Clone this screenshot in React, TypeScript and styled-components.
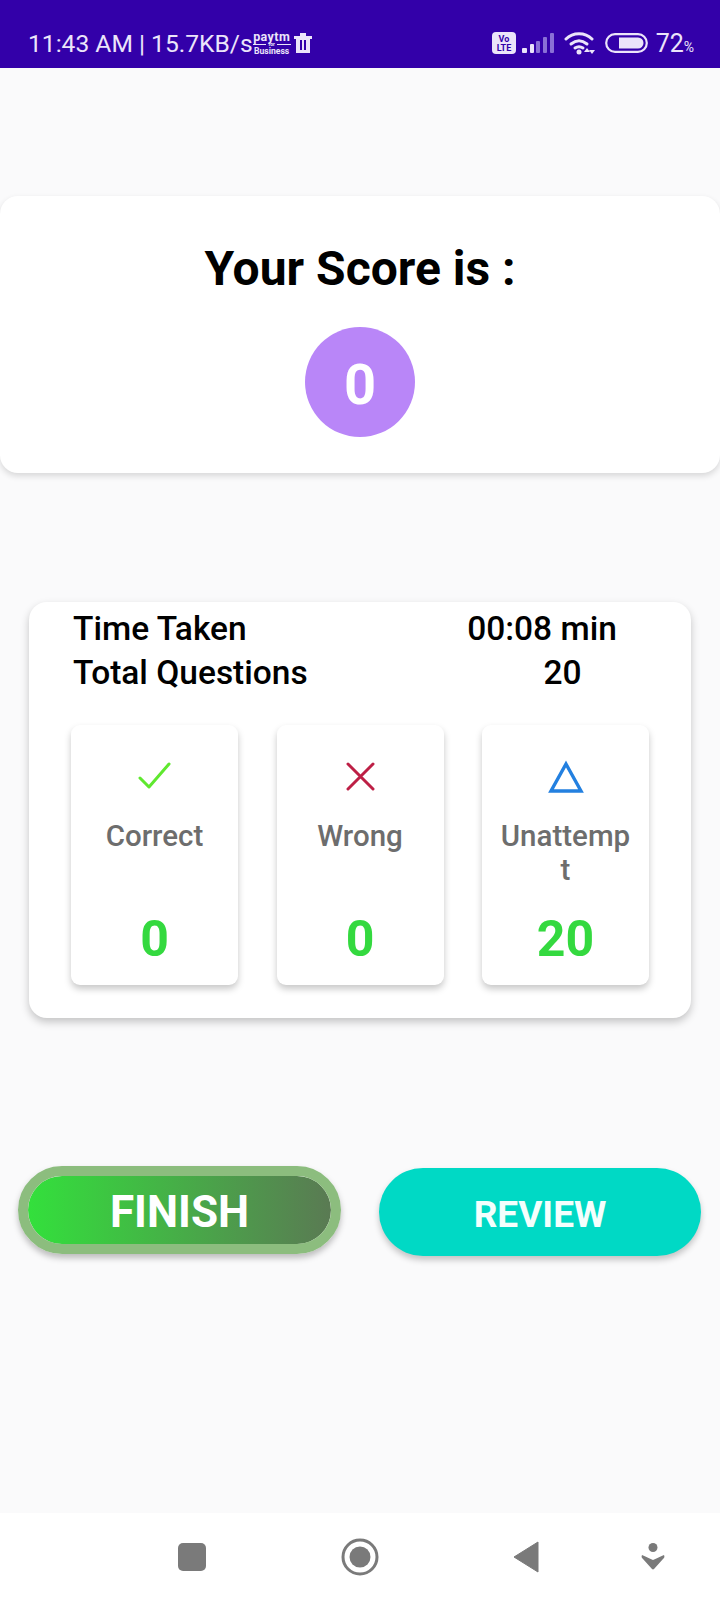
import React from "react";
import styled, { createGlobalStyle } from "styled-components";

const Global = createGlobalStyle`
  html, body { margin: 0; padding: 0; background: #fafafb; }
  * { box-sizing: border-box; }
`;

const Screen = styled.div`
  width: 720px;
  height: 1600px;
  display: flex;
  flex-direction: column;
  background: #fafafb;
  font-family: Roboto, "Liberation Sans", sans-serif;
  overflow: hidden;
`;

const StatusBar = styled.div`
  height: 68px;
  flex: none;
  background: #3300a9;
  color: #ebe4fa;
  display: flex;
  align-items: center;
  justify-content: space-between;
  padding: 18px 26px 0 28px;
  font-size: 25px;
`;

const StatusGroup = styled.div`
  display: flex;
  align-items: center;
`;

const Clock = styled.span`
  font-size: 24.6px;
  white-space: nowrap;
`;

const Paytm = styled.div`
  width: 38px;
  display: flex;
  flex-direction: column;
  align-items: center;
  line-height: 1;
  font-weight: 700;
`;

const PaytmTop = styled.span`
  font-size: 12.5px;
  line-height: 11px;
  letter-spacing: 0.4px;
`;

const PaytmMid = styled.span`
  width: 100%;
  display: flex;
  align-items: center;
  gap: 2px;
  font-size: 5px;
  line-height: 5px;
  &::before,
  &::after {
    content: "";
    flex: 1;
    height: 1px;
    background: #ebe4fa;
  }
`;

const PaytmBottom = styled.span`
  font-size: 8.6px;
  line-height: 9px;
`;

const StatusIcon = styled.svg<{ $gap: number }>`
  display: block;
  flex: none;
  margin-left: ${(p) => p.$gap}px;
`;

const Battery = styled.span`
  font-size: 25px;
  margin-left: 8px;
  white-space: nowrap;
`;

const Percent = styled.span`
  font-size: 14px;
`;

const Main = styled.main`
  flex: 1;
  display: flex;
  flex-direction: column;
`;

const ScoreCard = styled.section`
  margin-top: 128px;
  height: 277px;
  background: #fff;
  border-radius: 18px;
  box-shadow: 0 3px 6px rgba(0, 0, 0, 0.14);
  display: flex;
  flex-direction: column;
  align-items: center;
  padding-top: 46px;
`;

const ScoreTitle = styled.h1`
  margin: 0;
  font-size: 48px;
  line-height: 54px;
  font-weight: 700;
  color: #000;
`;

const ScoreCircle = styled.div`
  margin-top: 31px;
  width: 110px;
  height: 110px;
  border-radius: 50%;
  background: #b986f8;
  color: #fff;
  display: flex;
  align-items: center;
  justify-content: center;
  padding-top: 5px;
  font-size: 56px;
  font-weight: 700;
`;

const StatsCard = styled.section`
  margin: 129px 29px 0;
  height: 416px;
  background: #fff;
  border-radius: 18px;
  box-shadow: 0 4px 8px rgba(0, 0, 0, 0.22);
  padding: 4px 41px 0;
`;

const StatRow = styled.div`
  display: grid;
  grid-template-columns: 1fr 200px;
  height: 44.5px;
  align-items: center;
  padding-left: 3px;
  font-size: 33.5px;
  font-weight: 500;
  color: #000;
`;

const StatValue = styled.span<{ $left: number; $right: number }>`
  text-align: center;
  padding: 0 ${(p) => p.$right}px 0 ${(p) => p.$left}px;
  white-space: nowrap;
`;

const Tiles = styled.div`
  display: grid;
  grid-template-columns: repeat(3, 167px);
  justify-content: space-between;
  margin: 30px 1px 0;
`;

const Tile = styled.div`
  height: 260px;
  background: #fff;
  border-radius: 9px;
  box-shadow: 0 4px 7px rgba(0, 0, 0, 0.22);
  display: flex;
  flex-direction: column;
  align-items: center;
  padding: 32px 18px 0;
`;

const TileIcon = styled.svg`
  width: 40px;
  height: 40px;
  flex: none;
  display: block;
`;

const TileLabel = styled.div`
  margin-top: 22px;
  width: 100%;
  height: 85px;
  font-size: 29.5px;
  line-height: 34px;
  font-weight: 500;
  color: #6d6d6d;
  text-align: center;
  word-break: break-all;
`;

const TileValue = styled.div`
  margin-top: 6px;
  font-size: 50px;
  line-height: 58px;
  font-weight: 700;
  color: #34d93f;
`;

const Actions = styled.div`
  display: flex;
  justify-content: space-between;
  padding: 148px 19px 0 18px;
`;

const FinishButton = styled.button`
  width: 323px;
  height: 88px;
  border: 10px solid #8cbd7e;
  border-radius: 44px;
  background: linear-gradient(90deg, #33e03c 0%, #5a7a53 100%);
  background-clip: padding-box;
  box-shadow: 0 4px 6px rgba(0, 0, 0, 0.25);
  color: #fff;
  font-family: inherit;
  font-size: 44px;
  font-weight: 700;
  padding: 3px 0 0;
`;

const ReviewButton = styled.button`
  margin-top: 2px;
  width: 322px;
  height: 88px;
  border: none;
  border-radius: 44px;
  background: #00d9c5;
  box-shadow: 0 4px 6px rgba(0, 0, 0, 0.22);
  color: #f4fffd;
  font-family: inherit;
  font-size: 37px;
  font-weight: 700;
  padding: 5px 0 0;
`;

const NavBar = styled.nav`
  height: 87px;
  flex: none;
  background: #fff;
  display: grid;
  grid-template-columns: 178px 28px 135px 38px 133px 27px 102px 24px;
  align-items: center;
`;

const NavIcon = styled.svg`
  display: block;
`;

const NavSlot = styled.div`
  display: flex;
  justify-content: center;
`;

export default function App() {
  return (
    <Screen>
      <Global />
      <StatusBar>
        <StatusGroup>
          <Clock>11:43 AM | 15.7KB/s</Clock>
          <Paytm>
            <PaytmTop>paytm</PaytmTop>
            <PaytmMid>for</PaytmMid>
            <PaytmBottom>Business</PaytmBottom>
          </Paytm>
          <StatusIcon $gap={2} width="20" height="22" viewBox="0 0 20 22">
            <path d="M1 4h18v3H17v14H3V7H1zM7 1h6v3H7z" fill="#ebe4fa" />
            <path d="M7 8h2v10H7zM11 8h2v10h-2z" fill="#3300a9" />
          </StatusIcon>
        </StatusGroup>
        <StatusGroup>
          <StatusIcon $gap={0} width="24" height="22" viewBox="0 0 24 22">
            <rect width="24" height="22" rx="4" fill="#ebe4fa" />
            <text x="12" y="10" fontSize="9" fontWeight="700" textAnchor="middle" fill="#3300a9">Vo</text>
            <text x="12" y="19" fontSize="9" fontWeight="700" textAnchor="middle" fill="#3300a9">LTE</text>
          </StatusIcon>
          <StatusIcon $gap={5} width="34" height="22" viewBox="0 0 34 22">
            <rect x="1" y="16" width="5" height="5" rx="1" fill="#ebe4fa" />
            <rect x="9" y="12" width="4" height="9" rx="1" fill="#ebe4fa" />
            <rect x="15" y="9" width="4" height="12" rx="1" fill="#8a6fd6" />
            <rect x="22" y="5" width="4" height="16" rx="1" fill="#8a6fd6" />
            <rect x="29" y="1" width="4" height="20" rx="1" fill="#8a6fd6" />
          </StatusIcon>
          <StatusIcon $gap={9} width="32" height="24" viewBox="0 0 32 24">
            <g fill="none" stroke="#ebe4fa" strokeWidth="3" strokeLinecap="round">
              <path d="M2 8C9 1 21 1 28 8" />
              <path d="M7 13c5-4 11-4 16 0" />
              <path d="M11 17c3-2 5-2 8 0" />
            </g>
            <circle cx="15" cy="21" r="2.5" fill="#ebe4fa" />
            <path d="M23 17l-3 4h6zM28 23l3-4h-6z" fill="#ebe4fa" />
          </StatusIcon>
          <StatusIcon $gap={9} width="43" height="20" viewBox="0 0 43 20">
            <rect x="1.2" y="1.2" width="40.6" height="17.6" rx="8.8" fill="none" stroke="#ebe4fa" strokeWidth="2.2" />
            <path d="M14 4.5h19a5.5 5.5 0 0 1 0 11H14z" fill="#ebe4fa" />
          </StatusIcon>
          <Battery>
            72<Percent>%</Percent>
          </Battery>
        </StatusGroup>
      </StatusBar>

      <Main>
        <ScoreCard>
          <ScoreTitle>Your Score is :</ScoreTitle>
          <ScoreCircle>0</ScoreCircle>
        </ScoreCard>

        <StatsCard>
          <StatRow>
            <span>Time Taken</span>
            <StatValue $left={0} $right={16}>00:08 min</StatValue>
          </StatRow>
          <StatRow>
            <span>Total Questions</span>
            <StatValue $left={25} $right={0}>20</StatValue>
          </StatRow>
          <Tiles>
            <Tile>
              <TileIcon viewBox="0 0 40 40">
                <path d="M5 21l9 9L34 7" fill="none" stroke="#5fe82f" strokeWidth="3" strokeLinecap="round" strokeLinejoin="round" />
              </TileIcon>
              <TileLabel>Correct</TileLabel>
              <TileValue>0</TileValue>
            </Tile>
            <Tile>
              <TileIcon viewBox="0 0 40 40">
                <path d="M8 7l25 25M33 7L8 32" fill="none" stroke="#bd1f45" strokeWidth="3" strokeLinecap="round" />
              </TileIcon>
              <TileLabel>Wrong</TileLabel>
              <TileValue>0</TileValue>
            </Tile>
            <Tile>
              <TileIcon viewBox="0 0 40 40">
                <path d="M20 7L35 34H5z" fill="none" stroke="#2380e0" strokeWidth="3.4" />
              </TileIcon>
              <TileLabel>Unattempt</TileLabel>
              <TileValue>20</TileValue>
            </Tile>
          </Tiles>
        </StatsCard>

        <Actions>
          <FinishButton>FINISH</FinishButton>
          <ReviewButton>REVIEW</ReviewButton>
        </Actions>
      </Main>

      <NavBar>
        <span />
        <NavSlot>
          <NavIcon width="28" height="28" viewBox="0 0 28 28">
            <rect width="28" height="28" rx="5" fill="#7a7a7a" />
          </NavIcon>
        </NavSlot>
        <span />
        <NavSlot>
          <NavIcon width="38" height="38" viewBox="0 0 38 38">
            <circle cx="19" cy="19" r="17" fill="none" stroke="#7a7a7a" strokeWidth="3" />
            <circle cx="19" cy="19" r="10.5" fill="#7a7a7a" />
          </NavIcon>
        </NavSlot>
        <span />
        <NavSlot>
          <NavIcon width="26" height="32" viewBox="0 0 26 32">
            <path d="M25 1v30L1 16z" fill="#7a7a7a" stroke="#7a7a7a" strokeWidth="1" strokeLinejoin="round" />
          </NavIcon>
        </NavSlot>
        <span />
        <NavSlot>
          <NavIcon width="24" height="28" viewBox="0 0 24 28">
            <circle cx="12" cy="4.5" r="4.5" fill="#7a7a7a" />
            <path d="M1 12c4 2 7 3 11 5 4-2 7-3 11-5 1 2 0 3-1 4l-9 10c-.6.6-1.4.6-2 0L2 16c-1-1-2-2-1-4z" fill="#7a7a7a" />
          </NavIcon>
        </NavSlot>
      </NavBar>
    </Screen>
  );
}
